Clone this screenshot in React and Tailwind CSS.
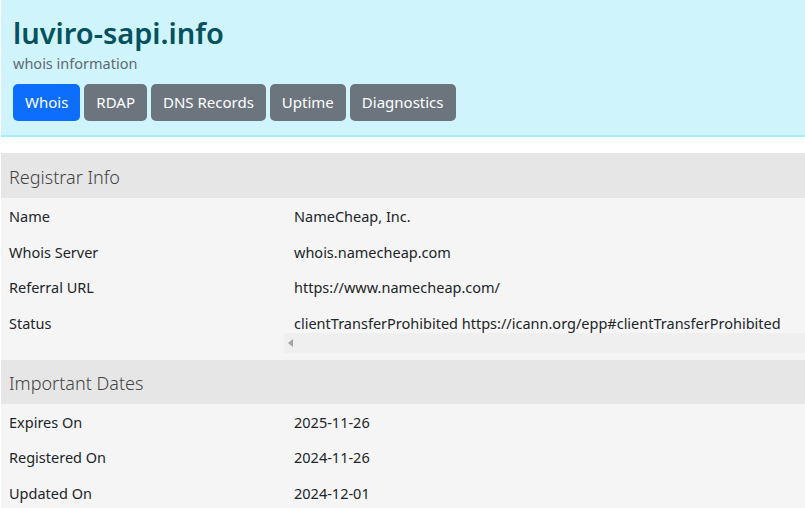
import React from "react";

const font = { fontFamily: '"Noto Sans", "Open Sans", sans-serif' };

function Row({ label, value }) {
  return (
    <div className="flex bg-[#f5f5f5]">
      <div className="w-[285px] shrink-0 pl-2 pt-[8px] h-[35.5px] text-[14.5px] text-[#212529] leading-[20px]">{label}</div>
      <div className="flex-1 min-w-0">
        <div className="pl-2 pt-[8px] h-[35.5px] text-[14.5px] text-[#212529] leading-[20px] whitespace-nowrap">{value}</div>
      </div>
    </div>
  );
}

export default function App() {
  return (
    <div className="w-[805px] h-[508px] overflow-hidden bg-white" style={font}>
      <div className="ml-px bg-[#cff4fc] border-b-2 border-[#a6ecfa] pl-3 pt-[15px] pb-[14px]">
        <h1 className="text-[29px] font-semibold leading-[36px] text-[#055160]">luviro-sapi.info</h1>
        <div className="text-[14.5px] leading-[20px] text-[#5f6b72] mt-[2px]">whois information</div>
        <div className="flex gap-1 mt-[11px]">
          <div className="h-[37px] px-3 flex items-center rounded-[5px] bg-[#0d6efd] text-white text-[15px]">Whois</div>
          <div className="h-[37px] px-3 flex items-center rounded-[5px] bg-[#6c757d] text-white text-[15px]">RDAP</div>
          <div className="h-[37px] px-3 flex items-center rounded-[5px] bg-[#6c757d] text-white text-[15px]">DNS Records</div>
          <div className="h-[37px] px-3 flex items-center rounded-[5px] bg-[#6c757d] text-white text-[15px]">Uptime</div>
          <div className="h-[37px] px-3 flex items-center rounded-[5px] bg-[#6c757d] text-white text-[15px]">Diagnostics</div>
        </div>
      </div>
      <div className="mt-[16px] ml-px">
        <div className="bg-[#e6e6e6] h-[45px] pl-2 pt-[4px] flex items-center text-[18px] font-light text-[#444]">Registrar Info</div>
        <Row label="Name" value="NameCheap, Inc." />
        <Row label="Whois Server" value="whois.namecheap.com" />
        <Row label="Referral URL" value="https://www.namecheap.com/" />
        <div className="flex bg-[#f5f5f5] h-[55px]">
          <div className="w-[285px] shrink-0 pl-2 pt-[8px] text-[14.5px] text-[#212529] leading-[20px]">Status</div>
          <div className="flex-1 min-w-0 flex flex-col">
            <div className="pl-2 pt-[8px] h-[28px] text-[14.5px] text-[#212529] leading-[20px] whitespace-nowrap">clientTransferProhibited https://icann.org/epp#clientTransferProhibited</div>
            <div className="-ml-[2px] h-[20px] bg-[#efefef] flex items-center pl-[4px]">
              <div className="w-0 h-0 border-y-[4px] border-y-transparent border-r-[5px] border-r-[#a3a3a3]" />
            </div>
          </div>
        </div>
        <div className="bg-[#e6e6e6] h-[44px] pl-2 pt-[4px] flex items-center text-[18px] font-light text-[#444]">Important Dates</div>
        <Row label="Expires On" value="2025-11-26" />
        <Row label="Registered On" value="2024-11-26" />
        <Row label="Updated On" value="2024-12-01" />
      </div>
    </div>
  );
}
